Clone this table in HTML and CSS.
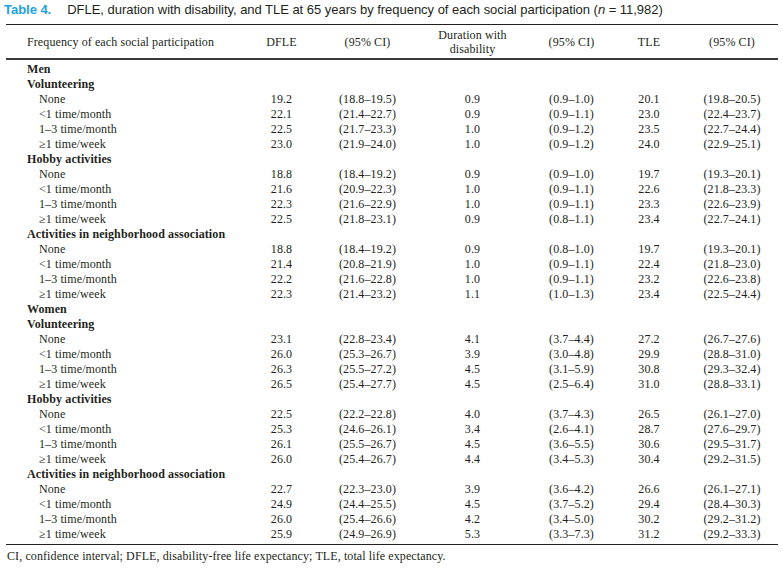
FILE: index.html
```html
<!DOCTYPE html>
<html lang="en">
<head>
<meta charset="utf-8">
<title>Table 4</title>
<link rel="stylesheet" href="styles.css">
</head>
<body>
<div class="page">
  <p class="caption"><span class="label">Table 4.</span>DFLE, duration with disability, and TLE at 65 years by frequency of each social participation (<i>n</i> = 11,982)</p>
  <table class="data">
    <colgroup>
      <col class="c1"><col class="c2"><col class="c3"><col class="c4"><col class="c5"><col class="c6"><col class="c7">
    </colgroup>
    <thead>
      <tr>
        <th class="first">Frequency of each social participation</th>
        <th>DFLE</th>
        <th>(95% CI)</th>
        <th>Duration with<br>disability</th>
        <th>(95% CI)</th>
        <th>TLE</th>
        <th>(95% CI)</th>
      </tr>
    </thead>
    <tbody>
      <tr class="top"><td class="grp">Men</td><td></td><td></td><td></td><td></td><td></td><td></td></tr>
      <tr><td class="grp">Volunteering</td><td></td><td></td><td></td><td></td><td></td><td></td></tr>
      <tr><td class="sub">None</td><td>19.2</td><td>(18.8–19.5)</td><td>0.9</td><td>(0.9–1.0)</td><td>20.1</td><td>(19.8–20.5)</td></tr>
      <tr><td class="sub">&lt;1 time/month</td><td>22.1</td><td>(21.4–22.7)</td><td>0.9</td><td>(0.9–1.1)</td><td>23.0</td><td>(22.4–23.7)</td></tr>
      <tr><td class="sub">1–3 time/month</td><td>22.5</td><td>(21.7–23.3)</td><td>1.0</td><td>(0.9–1.2)</td><td>23.5</td><td>(22.7–24.4)</td></tr>
      <tr><td class="sub">≥1 time/week</td><td>23.0</td><td>(21.9–24.0)</td><td>1.0</td><td>(0.9–1.2)</td><td>24.0</td><td>(22.9–25.1)</td></tr>
      <tr><td class="grp">Hobby activities</td><td></td><td></td><td></td><td></td><td></td><td></td></tr>
      <tr><td class="sub">None</td><td>18.8</td><td>(18.4–19.2)</td><td>0.9</td><td>(0.9–1.0)</td><td>19.7</td><td>(19.3–20.1)</td></tr>
      <tr><td class="sub">&lt;1 time/month</td><td>21.6</td><td>(20.9–22.3)</td><td>1.0</td><td>(0.9–1.1)</td><td>22.6</td><td>(21.8–23.3)</td></tr>
      <tr><td class="sub">1–3 time/month</td><td>22.3</td><td>(21.6–22.9)</td><td>1.0</td><td>(0.9–1.1)</td><td>23.3</td><td>(22.6–23.9)</td></tr>
      <tr><td class="sub">≥1 time/week</td><td>22.5</td><td>(21.8–23.1)</td><td>0.9</td><td>(0.8–1.1)</td><td>23.4</td><td>(22.7–24.1)</td></tr>
      <tr><td class="grp">Activities in neighborhood association</td><td></td><td></td><td></td><td></td><td></td><td></td></tr>
      <tr><td class="sub">None</td><td>18.8</td><td>(18.4–19.2)</td><td>0.9</td><td>(0.8–1.0)</td><td>19.7</td><td>(19.3–20.1)</td></tr>
      <tr><td class="sub">&lt;1 time/month</td><td>21.4</td><td>(20.8–21.9)</td><td>1.0</td><td>(0.9–1.1)</td><td>22.4</td><td>(21.8–23.0)</td></tr>
      <tr><td class="sub">1–3 time/month</td><td>22.2</td><td>(21.6–22.8)</td><td>1.0</td><td>(0.9–1.1)</td><td>23.2</td><td>(22.6–23.8)</td></tr>
      <tr><td class="sub">≥1 time/week</td><td>22.3</td><td>(21.4–23.2)</td><td>1.1</td><td>(1.0–1.3)</td><td>23.4</td><td>(22.5–24.4)</td></tr>
      <tr><td class="grp">Women</td><td></td><td></td><td></td><td></td><td></td><td></td></tr>
      <tr><td class="grp">Volunteering</td><td></td><td></td><td></td><td></td><td></td><td></td></tr>
      <tr><td class="sub">None</td><td>23.1</td><td>(22.8–23.4)</td><td>4.1</td><td>(3.7–4.4)</td><td>27.2</td><td>(26.7–27.6)</td></tr>
      <tr><td class="sub">&lt;1 time/month</td><td>26.0</td><td>(25.3–26.7)</td><td>3.9</td><td>(3.0–4.8)</td><td>29.9</td><td>(28.8–31.0)</td></tr>
      <tr><td class="sub">1–3 time/month</td><td>26.3</td><td>(25.5–27.2)</td><td>4.5</td><td>(3.1–5.9)</td><td>30.8</td><td>(29.3–32.4)</td></tr>
      <tr><td class="sub">≥1 time/week</td><td>26.5</td><td>(25.4–27.7)</td><td>4.5</td><td>(2.5–6.4)</td><td>31.0</td><td>(28.8–33.1)</td></tr>
      <tr><td class="grp">Hobby activities</td><td></td><td></td><td></td><td></td><td></td><td></td></tr>
      <tr><td class="sub">None</td><td>22.5</td><td>(22.2–22.8)</td><td>4.0</td><td>(3.7–4.3)</td><td>26.5</td><td>(26.1–27.0)</td></tr>
      <tr><td class="sub">&lt;1 time/month</td><td>25.3</td><td>(24.6–26.1)</td><td>3.4</td><td>(2.6–4.1)</td><td>28.7</td><td>(27.6–29.7)</td></tr>
      <tr><td class="sub">1–3 time/month</td><td>26.1</td><td>(25.5–26.7)</td><td>4.5</td><td>(3.6–5.5)</td><td>30.6</td><td>(29.5–31.7)</td></tr>
      <tr><td class="sub">≥1 time/week</td><td>26.0</td><td>(25.4–26.7)</td><td>4.4</td><td>(3.4–5.3)</td><td>30.4</td><td>(29.2–31.5)</td></tr>
      <tr><td class="grp">Activities in neighborhood association</td><td></td><td></td><td></td><td></td><td></td><td></td></tr>
      <tr><td class="sub">None</td><td>22.7</td><td>(22.3–23.0)</td><td>3.9</td><td>(3.6–4.2)</td><td>26.6</td><td>(26.1–27.1)</td></tr>
      <tr><td class="sub">&lt;1 time/month</td><td>24.9</td><td>(24.4–25.5)</td><td>4.5</td><td>(3.7–5.2)</td><td>29.4</td><td>(28.4–30.3)</td></tr>
      <tr><td class="sub">1–3 time/month</td><td>26.0</td><td>(25.4–26.6)</td><td>4.2</td><td>(3.4–5.0)</td><td>30.2</td><td>(29.2–31.2)</td></tr>
      <tr class="last"><td class="sub">≥1 time/week</td><td>25.9</td><td>(24.9–26.9)</td><td>5.3</td><td>(3.3–7.3)</td><td>31.2</td><td>(29.2–33.3)</td></tr>
    </tbody>
  </table>
  <p class="note">CI, confidence interval; DFLE, disability-free life expectancy; TLE, total life expectancy.</p>
</div>
</body>
</html>
```

FILE: styles.css
```css
html, body {
  margin: 0;
  padding: 0;
  background: #ffffff;
}

.page {
  padding: 2px 5px 0 4px;
  color: #231f20;
}

.caption {
  margin: 0;
  font-family: "Liberation Sans", Arial, sans-serif;
  font-size: 13px;
  line-height: 16px;
  letter-spacing: -0.03px;
  color: #231f20;
}

.caption .label {
  font-weight: bold;
  color: #1da2df;
  margin-right: 16px;
}

.data {
  margin: 6px 0 0 2px;
  width: 772px;
  border-collapse: collapse;
  table-layout: fixed;
  font-family: "Liberation Serif", "Times New Roman", serif;
  font-size: 12px;
  letter-spacing: 0.1px;
  color: #231f20;
  border-top: 1px solid #231f20;
  border-bottom: 1px solid #231f20;
}

.c1 { width: 236px; }
.c2 { width: 79px; }
.c3 { width: 93px; }
.c4 { width: 117px; }
.c5 { width: 81px; }
.c6 { width: 74px; }
.c7 { width: 92px; }

.data th {
  font-weight: normal;
  text-align: center;
  vertical-align: middle;
  line-height: 14px;
  height: 33px;
  padding: 0;
  border-bottom: 2px solid #3a3a3a;
}

.data th.first {
  text-align: left;
  padding-left: 21px;
}

.data td {
  padding: 0;
  line-height: 15px;
  height: 15px;
  text-align: center;
  white-space: nowrap;
}

.data tr.top td {
  padding-top: 2px;
}

.data tr.last td {
  padding-bottom: 2px;
}

.data td.grp {
  text-align: left;
  font-weight: bold;
  padding-left: 21px;
}

.data td.sub {
  text-align: left;
  padding-left: 33px;
}

.note {
  margin: 4px 0 0 3px;
  font-family: "Liberation Serif", "Times New Roman", serif;
  font-size: 12px;
  line-height: 15px;
  letter-spacing: 0.1px;
  color: #231f20;
}
```
